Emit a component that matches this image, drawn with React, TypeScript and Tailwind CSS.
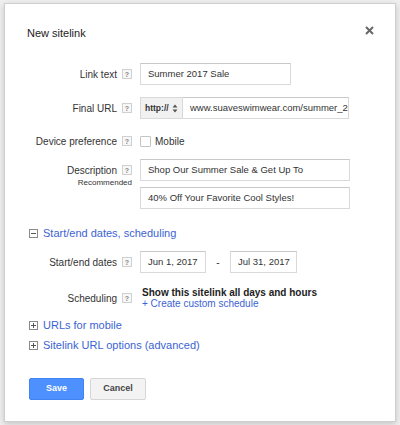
import React from 'react';

// 小问号帮助图标
const Help: React.FC = () => (
  <span className="inline-flex items-center justify-center w-[10px] h-[10px] border border-[#d0d0d0] bg-[#f7f7f7] text-[7px] leading-none text-[#888] font-bold shrink-0">
    ?
  </span>
);

// 展开 / 收起图标
const Toggle: React.FC<{ open?: boolean }> = ({ open }) => (
  <svg width="9" height="9" viewBox="0 0 9 9" className="shrink-0">
    <rect x="0.5" y="0.5" width="8" height="8" fill="#fff" stroke="#8a8a8a" />
    <line x1="2" y1="4.5" x2="7" y2="4.5" stroke="#555" />
    {!open && <line x1="4.5" y1="2" x2="4.5" y2="7" stroke="#555" />}
  </svg>
);

const Field: React.FC<{ className?: string; children: React.ReactNode }> = ({ className = '', children }) => (
  <div
    className={`h-[22px] flex items-center pl-[7px] border border-[#d9d9d9] border-t-[#c8c8c8] bg-white text-[9.5px] text-[#333] whitespace-nowrap overflow-hidden ${className}`}
  >
    {children}
  </div>
);

// 表单行：左侧标签 + 帮助图标
const Row: React.FC<{ label: string; className?: string; children: React.ReactNode }> = ({ label, className = '', children }) => (
  <div className={`flex items-center ${className}`}>
    <div className="w-[105px] flex items-center justify-end">
      <span className="text-[10px] text-[#333] mr-[5px]">{label}</span>
      <Help />
    </div>
    <div className="ml-[8px] flex items-center">{children}</div>
  </div>
);

const SectionLink: React.FC<{ open?: boolean; text: string; className?: string }> = ({ open, text, className = '' }) => (
  <div className={`flex items-center h-[16px] ml-[2px] ${className}`}>
    <Toggle open={open} />
    <span className="ml-[5px] text-[11px] text-[#3b63d3]">{text}</span>
  </div>
);

export default function App() {
  return (
    <div
      className="w-[400px] h-[425px] bg-[#efefef] pt-[3px] pl-[4px]"
      style={{ fontFamily: '"Liberation Sans", Arial, sans-serif' }}
    >
      <div className="w-[392px] h-[419px] bg-white border border-[#cfcfcf] shadow-[0_2px_6px_rgba(0,0,0,0.18)] pt-[19px] pl-[22px] pr-[21px]">
        {/* 标题栏 */}
        <div className="flex items-center justify-between h-[20px]">
          <span className="text-[11px] text-[#222]">New sitelink</span>
          <svg width="9" height="9" viewBox="0 0 9 9" className="-mt-[6px]">
            <line x1="1" y1="1" x2="8" y2="8" stroke="#666" strokeWidth="2" />
            <line x1="8" y1="1" x2="1" y2="8" stroke="#666" strokeWidth="2" />
          </svg>
        </div>

        <Row label="Link text" className="mt-[20px]">
          <Field className="w-[151px]">Summer 2017 Sale</Field>
        </Row>

        <Row label="Final URL" className="mt-[12px]">
          <div className="flex">
            <div className="h-[22px] w-[43px] flex items-center pl-[4px] bg-[#f1f1f1] border border-[#d9d9d9] text-[8.5px] font-bold text-[#333]">
              http://
              <svg width="6" height="9" viewBox="0 0 6 9" className="ml-[3px]">
                <path d="M3 0.5 L5.5 3.5 L0.5 3.5 Z" fill="#555" />
                <path d="M3 8.5 L5.5 5.5 L0.5 5.5 Z" fill="#555" />
              </svg>
            </div>
            <Field className="w-[166px] border-l-0">www.suaveswimwear.com/summer_2017</Field>
          </div>
        </Row>

        <Row label="Device preference" className="mt-[14px] h-[16px]">
          <span className="w-[11px] h-[11px] border border-[#c4c4c4] rounded-[1px] bg-white" />
          <span className="ml-[4px] text-[10px] text-[#333]">Mobile</span>
        </Row>

        {/* 描述 */}
        <div className="flex items-start mt-[10px]">
          <div className="w-[105px]">
            <div className="h-[22px] flex items-center justify-end">
              <span className="text-[10px] text-[#333] mr-[5px]">Description</span>
              <Help />
            </div>
            <div className="text-right text-[8px] leading-[10px] -mt-[3px] text-[#333]">Recommended</div>
          </div>
          <div className="ml-[8px] flex flex-col gap-[6px]">
            <Field className="w-[210px]">Shop Our Summer Sale &amp; Get Up To</Field>
            <Field className="w-[210px]">40% Off Your Favorite Cool Styles!</Field>
          </div>
        </div>

        <SectionLink open text="Start/end dates, scheduling" className="mt-[16px]" />

        <Row label="Start/end dates" className="mt-[10px]">
          <Field className="w-[66px]">Jun 1, 2017</Field>
          <span className="w-[24px] text-center text-[10px] text-[#333]">-</span>
          <Field className="w-[67px]">Jul 31, 2017</Field>
        </Row>

        <Row label="Scheduling" className="mt-[14px]">
          <div className="flex flex-col ml-[2px]">
            <span className="text-[10px] leading-[11px] font-bold text-[#222]">Show this sitelink all days and hours</span>
            <span className="text-[10px] leading-[11px] text-[#3b63d3]">+ Create custom schedule</span>
          </div>
        </Row>

        <SectionLink text="URLs for mobile" className="mt-[8px]" />
        <SectionLink text="Sitelink URL options (advanced)" className="mt-[4px]" />

        {/* 按钮 */}
        <div className="flex gap-[6px] mt-[25px] ml-[2px]">
          <button
            type="button"
            className="h-[22px] w-[55px] rounded-[2px] bg-[#4d90fe] border border-[#3f83f5] text-white text-[9px] font-bold"
          >
            Save
          </button>
          <button
            type="button"
            className="h-[22px] w-[56px] rounded-[2px] bg-[#f3f3f3] border border-[#d6d6d6] text-[#444] text-[9px] font-bold"
          >
            Cancel
          </button>
        </div>
      </div>
    </div>
  );
}
